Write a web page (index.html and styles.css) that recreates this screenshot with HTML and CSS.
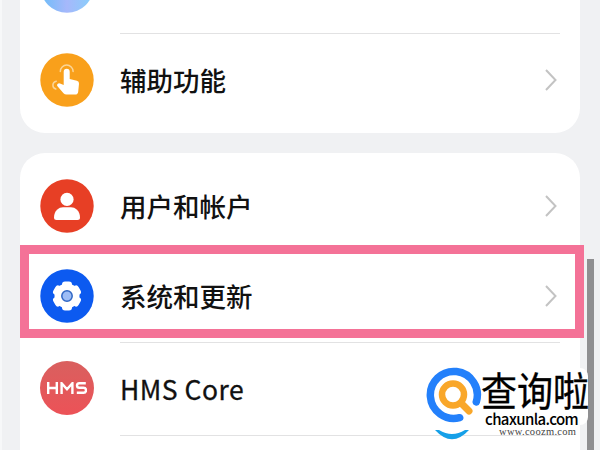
FILE: index.html
```html
<!DOCTYPE html>
<html lang="zh-Hans">
<head>
  <meta charset="UTF-8" />
  <meta name="viewport" content="width=device-width, initial-scale=1.0"/>
  <title>设置</title>
  <link rel="stylesheet" href="styles.css">
</head>
<body>
  <div class="screen">
    <div class="card card-top">
      <div class="row row-cut">
        <svg class="icon" viewBox="0 0 54 54">
          <defs>
            <linearGradient id="sky" x1="0" y1="0" x2="1" y2="0">
              <stop offset="0" stop-color="#6cbdf8"/>
              <stop offset="0.5" stop-color="#a6b8fb"/>
              <stop offset="1" stop-color="#86d0fa"/>
            </linearGradient>
          </defs>
          <circle cx="27" cy="27" r="26.7" fill="url(#sky)"/>
        </svg>
      </div>
      <div class="row">
        <svg class="icon" viewBox="0 0 54 54">
          <circle cx="27" cy="27" r="26.7" fill="#f9a01b"/>
          <path d="M23.7 32V18.8a3 3 0 0 1 6 0V26l7.2 1.8q2.3.7 2.1 3l-.8 8q-.3 2.8-3 2.8h-8.7q-1.8 0-3-1.3l-6-7q-1.2-1.6.3-2.6 1-.7 2.2-.2z" fill="#fff"/>
          <path d="M20.3 18.5a6.4 6.4 0 0 1 12.8 0M16.3 28.2a4 4 0 0 0-.5 7.8" fill="none" stroke="#fbd597" stroke-width="1.5" stroke-linecap="round"/>
        </svg>
        <span class="label">辅助功能</span>
        <svg class="arrow" viewBox="0 0 14 24"><path d="M2 2l9.5 10L2 22"/></svg>
      </div>
    </div>

    <div class="card card-main">
      <div class="row">
        <svg class="icon" viewBox="0 0 54 54">
          <circle cx="27" cy="27" r="26.7" fill="#e73f25"/>
          <circle cx="27" cy="20.4" r="6.6" fill="#fff"/>
          <path d="M14 38.5c0-7 5-10.2 9-10.2h8c4 0 9 3.2 9 10.2q0 2.5-2.5 2.5h-21q-2.5 0-2.5-2.5z" fill="#fff"/>
        </svg>
        <span class="label">用户和帐户</span>
        <svg class="arrow" viewBox="0 0 14 24"><path d="M2 2l9.5 10L2 22"/></svg>
      </div>
      <div class="row">
        <svg class="icon" viewBox="0 0 54 54">
          <circle cx="27" cy="27" r="26.7" fill="#0c5af0"/>
          <g fill="#fff">
            <circle cx="27" cy="27" r="12.5"/>
            <rect x="22" y="12.5" width="10" height="29" rx="3"/>
            <rect x="22" y="12.5" width="10" height="29" rx="3" transform="rotate(60 27 27)"/>
            <rect x="22" y="12.5" width="10" height="29" rx="3" transform="rotate(120 27 27)"/>
          </g>
          <circle cx="27" cy="27" r="5.2" fill="#9dbdf6" stroke="#2f66c4" stroke-width="1.5"/>
        </svg>
        <span class="label">系统和更新</span>
        <svg class="arrow" viewBox="0 0 14 24"><path d="M2 2l9.5 10L2 22"/></svg>
      </div>
      <div class="row">
        <div class="icon hms">
          <svg viewBox="0 0 40 12"><path d="M1.2 0v12M9.8 0v12M1.2 6h8.6M14.6 12V1.2l5.4 6 5.4-6V12M38.8 1.2h-6.5q-2.3 0-2.3 2.3 0 2.3 2.3 2.3h4.2q2.5 0 2.5 2.5t-2.5 2.5h-6.7"/></svg>
        </div>
        <span class="label latin">HMS Core</span>
      </div>
      <div class="row row-last"></div>
    </div>
  </div>

  <div class="highlight"></div>
  <div class="scrollbar"></div>

  <!-- 水印 -->
  <div class="watermark">
    <svg class="mark" viewBox="0 0 60 76">
      <path d="M10 63q17 18.5 34 0l-4 0q-13 8-26 0z" fill="#16a0e8"/>
      <path d="M34.7 50.7A23.5 23.5 0 1 1 51.3 34.8" fill="none" stroke="#2380fb" stroke-width="7.5" stroke-linecap="round"/>
      <circle cx="28" cy="27.5" r="11" fill="none" stroke="#f9a72a" stroke-width="6.5"/>
      <path d="M36 36l8 8" stroke="#f9a72a" stroke-width="7" stroke-linecap="round"/>
    </svg>
    <div class="mark-text">
      <div class="mark-name">查询啦</div>
      <div class="mark-site">chaxunla.com</div>
      <div class="mark-url">www.coozm.com</div>
    </div>
  </div>
</body>
</html>
```

FILE: styles.css
```css
:root {
  --bg-color: #f0f1f3;
  --card-bg: #ffffff;
  --line-color: #e2e2e3;
  --text-color: #111111;
  --highlight: #f47297;
}
* { box-sizing: border-box; }
body {
  margin: 0;
  height: 450px;
  overflow: hidden;
  position: relative;
  background-color: var(--bg-color);
  color: var(--text-color);
  font-family: "Noto Sans CJK SC", sans-serif;
}
.screen {
  height: 450px;
  padding: 0 20px 0 18px;
  border-left: 2px solid #f7f8f9;
  display: flex;
  flex-direction: column;
  gap: 20px;
  overflow: hidden;
}
.card {
  background: var(--card-bg);
  flex-shrink: 0;
}
.card-top {
  height: 133px;
  border-radius: 0 0 25px 25px;
}
.card-main {
  height: 320px;
  border-radius: 25px 25px 0 0;
  padding-top: 7px;
}
.row {
  display: flex;
  align-items: center;
  height: 91px;
  padding: 0 20px;
  position: relative;
}
.row + .row { height: 93px; }
.row + .row::before {
  content: "";
  position: absolute;
  left: 100px;
  right: 20px;
  top: 0;
  height: 1px;
  background: var(--line-color);
}
.card-main .row + .row {
  height: 91px;
  padding-bottom: 2px;
}
.card-main .row:nth-child(3) {
  height: 93px;
  padding-bottom: 1px;
}
.row-cut {
  height: 33px;
  align-items: flex-end;
  padding-bottom: 20px;
}
.icon {
  width: 54px;
  height: 54px;
  flex-shrink: 0;
}
.label {
  flex: 1;
  margin-left: 26px;
  font-size: 26.5px;
  font-weight: 500;
  line-height: 40px;
}
.latin {
  padding-top: 2px;
  letter-spacing: 0.5px;
  font-weight: 400;
  -webkit-text-stroke: 0.3px var(--text-color);
}
.arrow {
  width: 14px;
  height: 24px;
  margin-right: 2px;
}
.arrow path {
  fill: none;
  stroke: #c3c3c3;
  stroke-width: 2;
}
.hms {
  display: flex;
  align-items: center;
  justify-content: center;
  border-radius: 50%;
  background: linear-gradient(#d9605f, #ec5257);
}
.hms svg {
  width: 40px;
  height: 12px;
}
.hms path {
  fill: none;
  stroke: #fff;
  stroke-width: 2.4;
}
.highlight {
  position: absolute;
  left: 20px;
  top: 245px;
  width: 564px;
  height: 93px;
  border: 9px solid var(--highlight);
}
.scrollbar {
  position: absolute;
  left: 587px;
  top: 259px;
  width: 7px;
  height: 191px;
  background: #8f8f91;
}
.watermark {
  position: absolute;
  left: 425px;
  top: 367px;
  display: flex;
}
.mark {
  width: 60px;
  height: 76px;
}
.mark-text {
  width: 103px;
  height: 57px;
  margin-top: 1px;
  padding-top: 3px;
  background: #fff;
  border-radius: 0 8px 8px 0;
  white-space: nowrap;
}
.mark-name {
  margin-left: -4px;
  height: 39px;
  line-height: 36px;
  font-size: 36px;
  font-weight: 400;
  color: #000;
  -webkit-text-stroke: 0.3px #000;
  transform: scaleY(1.1);
}
.mark-site {
  height: 17px;
  line-height: 17px;
  font-size: 15px;
  font-weight: 500;
  letter-spacing: -0.6px;
  color: #000;
}
.mark-url {
  margin-left: 14px;
  line-height: 10px;
  font-family: "Liberation Serif", serif;
  font-size: 10.5px;
  letter-spacing: 0.3px;
  color: #444;
}
```
